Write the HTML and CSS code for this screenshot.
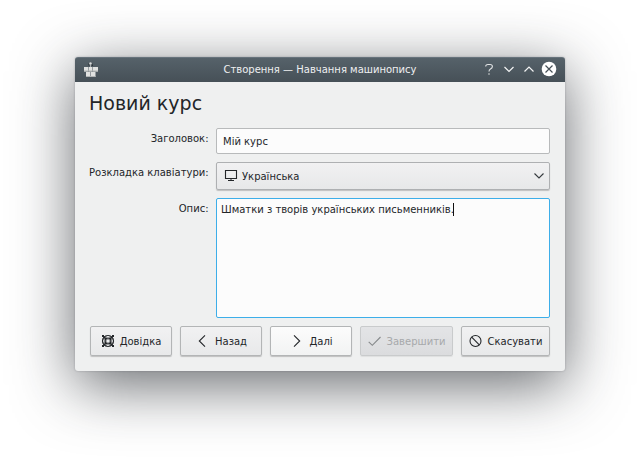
FILE: index.html
```html
<!DOCTYPE html>
<html lang="uk">
<head>
<meta charset="utf-8">
<title>Створення — Навчання машинопису</title>
<link rel="stylesheet" href="styles.css">
</head>
<body>
<main class="window">
  <header class="titlebar">
    <svg class="app-icon" width="16" height="16" viewBox="0 0 16 16">
      <path d="M6 3.500V1.500L8.500 1L9.500 4" fill="none" stroke="#252b2f" stroke-width="1"/>
      <circle cx="7.500" cy="1.500" r="1.300" fill="#d9dcdd"/>
      <path d="M7.500 3v2" stroke="#a6aaab"/>
      <path d="M1 5h4v4.500H1zM5.500 5h4v4.500h-4zM10 5h5v4.500h-5zM3 10h4.500v5H3zM8 10h4.500v5H8z" fill="#e0e1e0"/>
      <path d="M1 9h14M3 14.500h9.500" stroke="#b2b5b5"/>
    </svg>
    <span class="caption">Створення — Навчання машинопису</span>
    <div class="controls">
      <svg width="16" height="16" viewBox="0 0 16 16"><path d="M4.700 5.500Q4.700 3.500 7 3.500H9Q11.400 3.500 11.400 5.500Q11.400 7 9.500 8Q8 8.800 8 10.500M8 12.300v1.400" fill="none" stroke="#e2e4e5" stroke-width="1.100"/></svg>
      <svg width="16" height="16" viewBox="0 0 16 16"><path d="M3.500 6L8 10.500L12.500 6" fill="none" stroke="#f4f5f5" stroke-width="1.200"/></svg>
      <svg width="16" height="16" viewBox="0 0 16 16"><path d="M3.500 10.500L8 6L12.500 10.500" fill="none" stroke="#f4f5f5" stroke-width="1.200"/></svg>
      <svg width="16" height="16" viewBox="0 0 16 16"><circle cx="8" cy="8" r="7.300" fill="#fff"/><path d="M4.500 4.500L11.500 11.500M11.500 4.500L4.500 11.500" stroke="#465057" stroke-width="1.200"/></svg>
    </div>
  </header>
  <h1 class="heading">Новий курс</h1>
  <div class="form">
    <label class="label">Заголовок:</label>
    <div class="input">Мій курс</div>
    <label class="label">Розкладка клавіатури:</label>
    <div class="select">
      <svg width="14" height="14" viewBox="0 0 14 14"><path d="M1.500 1.500h11v8h-11z" fill="none" stroke="#232629" stroke-width="1.100"/><path d="M7 9.500v2M4 11.500h6" stroke="#232629"/></svg>
      <span class="select-value">Українська</span>
      <svg width="12" height="12" viewBox="0 0 12 12"><path d="M1.500 3.500L6 8L10.500 3.500" fill="none" stroke="#35393d" stroke-width="1.100"/></svg>
    </div>
    <label class="label">Опис:</label>
    <div class="textarea"><span class="typed">Шматки з творів українських письменників.</span><span class="caret"></span></div>
  </div>
  <footer class="buttons">
    <button class="button help">
      <svg width="14" height="14" viewBox="0 0 14 14"><circle cx="7" cy="7" r="5.500" fill="none" stroke="#232629" stroke-width="1.200"/><circle cx="7" cy="7" r="3" fill="none" stroke="#232629" stroke-width="1.200"/><path d="M1.500 5h11M1.500 9h11M5 1.500v11M9 1.500v11" stroke="#232629" stroke-width=".7"/><path d="M1 1h2v2H1zM11 1h2v2h-2zM1 11h2v2H1zM11 11h2v2h-2z" fill="#232629"/><path d="M2.500 2.500l2.500 2.500M11.500 2.500L9 5M2.500 11.500L5 9M11.500 11.500L9 9" stroke="#232629" stroke-width="1.500"/></svg>
      <span>Довідка</span>
    </button>
    <button class="button back">
      <svg width="14" height="14" viewBox="0 0 14 14"><path d="M10 1.300L4.300 7L10 12.700" fill="none" stroke="#232629" stroke-width="1.100"/></svg>
      <span>Назад</span>
    </button>
    <button class="button next">
      <svg width="14" height="14" viewBox="0 0 14 14"><path d="M5 1.300L10.700 7L5 12.700" fill="none" stroke="#232629" stroke-width="1.100"/></svg>
      <span>Далі</span>
    </button>
    <button class="button finish" disabled>
      <svg width="14" height="14" viewBox="0 0 14 14"><path d="M.7 7.800L4.300 11.300L12.500 3" fill="none" stroke="#86898b" stroke-width="1.100"/></svg>
      <span>Завершити</span>
    </button>
    <button class="button cancel">
      <svg width="14" height="14" viewBox="0 0 14 14"><circle cx="6.500" cy="7" r="5.500" fill="none" stroke="#232629" stroke-width="1.100"/><path d="M2.700 3.200L10.300 10.800" stroke="#232629" stroke-width="1.100"/></svg>
      <span>Скасувати</span>
    </button>
  </footer>
</main>
</body>
</html>
```
FILE: styles.css
```css
* { box-sizing: border-box; }
body {
  margin: 0;
  height: 464px;
  padding: 57px 75px 93px;
  background: #fff;
  overflow: hidden;
  font: 10px/14px "DejaVu Sans", sans-serif;
  color: #232629;
}
svg { display: block; flex: none; }
.window {
  width: 490px;
  height: 314px;
  border-radius: 3px;
  background: #eff0f0;
  box-shadow: 0 0 2px rgba(30, 34, 40, .3), 0 14px 60px rgba(30, 34, 40, .68);
}
.titlebar {
  display: flex;
  align-items: center;
  height: 25px;
  padding: 0 8px 1px;
  border-radius: 3px 3px 0 0;
  border-top: 1px solid #67737c;
  background: linear-gradient(#56626a, #465057);
  color: #eff0f1;
}
.caption { flex: 1; padding: 1px 0 0 60px; text-align: center; white-space: nowrap; }
.controls { display: flex; gap: 4px; padding-bottom: 1px; }
.heading { margin: 0; padding: 9px 14px 0; height: 46px; font-size: 19px; line-height: 24px; font-weight: 400; }
.form {
  display: grid;
  grid-template-columns: 120px 334px;
  grid-template-rows: 26px 28px 120px;
  gap: 8px 7px;
  padding-left: 14px;
}
.label { padding-top: 4px; margin-right: .5px; text-align: right; white-space: nowrap; }
.input, .select, .textarea { border: 1px solid #b8babb; border-radius: 2px; background: #fcfcfc; }
.input { padding: 6px; }
.select {
  display: flex;
  align-items: center;
  padding: 0 4px 0 7px;
  border-color: #aeb0b2;
  background: linear-gradient(#f1f1f2, #e7e8e9);
  box-shadow: 0 1px 1px #0003;
}
.select-value { flex: 1; padding: 1px 0 0 4px; }
.textarea { display: flex; align-items: flex-start; padding: 4px; border-color: #3daee9; }
.caret { width: 1px; height: 13px; margin-left: -.6px; background: #111; }
.buttons { display: flex; gap: 8px; padding: 8px 15px; }
.button {
  display: flex;
  align-items: center;
  justify-content: center;
  gap: 5px;
  width: 82px;
  height: 30px;
  padding: 0;
  border: 1px solid #b3b5b6;
  border-radius: 2px;
  background: linear-gradient(#f1f1f2, #e8e9ea);
  box-shadow: 0 1px 1px #0003;
  font: inherit;
  color: inherit;
}
.button span { padding-top: 1px; }
.back, .next { gap: 6px; }
.next { background: linear-gradient(#fcfcfc, #f2f3f3); }
.finish { width: 93px; border-color: #c9cbcc; background: linear-gradient(#e3e4e6, #dbdcde); color: #a7a9ab; box-shadow: 0 1px 1px #0001; }
.cancel { width: 89px; }
```
